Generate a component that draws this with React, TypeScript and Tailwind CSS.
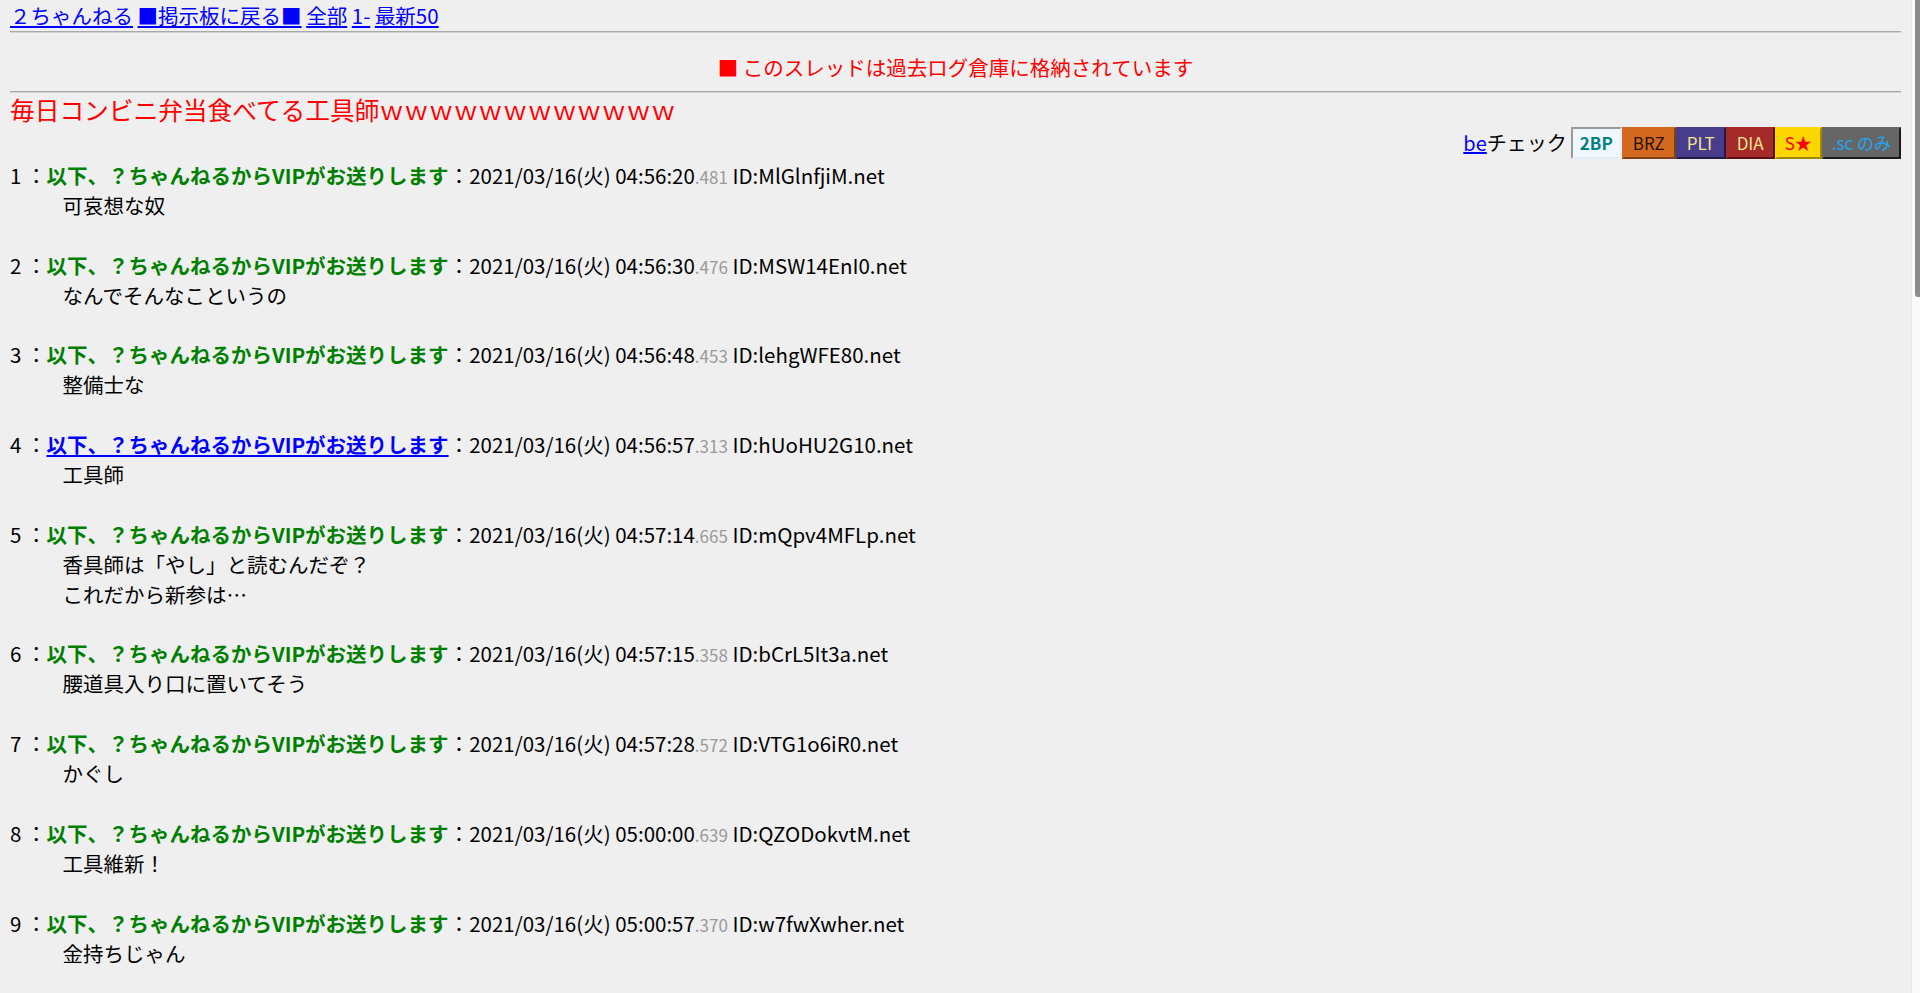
import React from "react";

type Post = {
  n: number;
  time: string;
  ms: string;
  id: string;
  body: string[];
  mail?: boolean;
};

const posts: Post[] = [
  { n: 1, time: "04:56:20", ms: ".481", id: "MlGlnfjiM.net", body: ["可哀想な奴"] },
  { n: 2, time: "04:56:30", ms: ".476", id: "MSW14EnI0.net", body: ["なんでそんなこというの"] },
  { n: 3, time: "04:56:48", ms: ".453", id: "lehgWFE80.net", body: ["整備士な"] },
  { n: 4, time: "04:56:57", ms: ".313", id: "hUoHU2G10.net", body: ["工具師"], mail: true },
  { n: 5, time: "04:57:14", ms: ".665", id: "mQpv4MFLp.net", body: ["香具師は「やし」と読むんだぞ？", "これだから新参は…"] },
  { n: 6, time: "04:57:15", ms: ".358", id: "bCrL5It3a.net", body: ["腰道具入り口に置いてそう"] },
  { n: 7, time: "04:57:28", ms: ".572", id: "VTG1o6iR0.net", body: ["かぐし"] },
  { n: 8, time: "05:00:00", ms: ".639", id: "QZODokvtM.net", body: ["工具維新！"] },
  { n: 9, time: "05:00:57", ms: ".370", id: "w7fwXwher.net", body: ["金持ちじゃん"] },
];

const NAME = "以下、？ちゃんねるからVIPがお送りします";

function Hr() {
  return <div className="h-[2px] border-t border-t-[#a9a9a9] border-b border-b-[#d4d4d4]" />;
}

export default function App() {
  return (
    <div className="flex h-[993px] overflow-hidden bg-[#efefef] font-['Noto_Sans_CJK_JP',sans-serif] text-[20.5px] text-black">
      <div className="flex-1 px-[10px]">
        {/* top nav */}
        <div className="pt-[1px] leading-[29px] whitespace-pre">
          <a className="text-[#0000ff] underline">２ちゃんねる</a>{" "}
          <a className="text-[#0000ff] underline">■掲示板に戻る■</a>{" "}
          <a className="text-[#0000ff] underline">全部</a>{" "}
          <a className="text-[#0000ff] underline">1-</a>{" "}
          <a className="text-[#0000ff] underline">最新50</a>
        </div>
        <div className="mt-[1px]">
          <Hr />
        </div>
        <div className="pt-[20px] pb-[9px] text-center leading-[29px] text-[#ff0000]">
          ■ このスレッドは過去ログ倉庫に格納されています
        </div>
        <Hr />
        <h1 className="text-[24.7px] leading-[30px] text-[#ff0000] font-normal pt-[1px]">
          毎日コンビニ弁当食べてる工具師ｗｗｗｗｗｗｗｗｗｗｗｗ
        </h1>
        <div className="flex h-[36px] items-center justify-end pt-[1px]">
          <span className="text-[20px] leading-[29px]">
            <a className="text-[#0000ff] underline">be</a>チェック
          </span>
          <div className="ml-[4px] flex text-[17px] leading-[28px]">
            <span className="border-2 border-t-[#9a9a9a] border-l-[#9a9a9a] border-r-[#e6eef5] border-b-[#e6eef5] bg-[#f0f8ff] px-[7px] font-bold text-[#008080]">2BP</span>
            <span className="border-2 border-t-[#d2691e] border-l-[#d2691e] border-r-[#7e3f12] border-b-[#7e3f12] bg-[#d2691e] px-[9px] text-[#2a1200]">BRZ</span>
            <span className="border-2 border-t-[#483d8b] border-l-[#483d8b] border-r-[#211a45] border-b-[#211a45] bg-[#483d8b] px-[9px] text-[#f0e68c]">PLT</span>
            <span className="border-2 border-t-[#a52a2a] border-l-[#a52a2a] border-r-[#581010] border-b-[#581010] bg-[#a52a2a] px-[9px] text-[#f0e68c]">DIA</span>
            <span className="border-2 border-t-[#ffd700] border-l-[#ffd700] border-r-[#a08800] border-b-[#a08800] bg-[#ffd700] px-[8px] text-[#ff0000]">S★</span>
            <span className="border-2 border-t-[#666666] border-l-[#666666] border-r-[#1a1a1a] border-b-[#1a1a1a] bg-[#666666] px-[8px] text-[#1ea7f5]">.sc のみ</span>
          </div>
        </div>
        <dl>
          {posts.map((p) => (
            <div key={p.n}>
              <dt className="h-[30px] leading-[30px] whitespace-pre">
                <span>{p.n}</span>{" "}
                <span>：</span>
                {p.mail ? (
                  <a className="font-bold text-[#0000ff] underline">{NAME}</a>
                ) : (
                  <span className="font-bold text-[#008000]">{NAME}</span>
                )}
                <span>：</span>
                <span>2021/03/16(火) {p.time}</span>
                <span className="text-[17px] leading-none text-[#999999]">{p.ms}</span>{" "}
                <span>ID:{p.id}</span>
              </dt>
              <dd className="ml-[52.5px] mb-[29.7px] leading-[30px]">
                {p.body.map((l, i) => (
                  <div key={i}>{l}</div>
                ))}
              </dd>
            </div>
          ))}
        </dl>
      </div>
      <div className="flex w-[9px] shrink-0 justify-end border-l border-l-[#e8e8e8] bg-[#fafafa]">
        <div className="h-[297px] w-[5px] rounded-bl-[3px] bg-[#8c8c8c]" />
      </div>
    </div>
  );
}
